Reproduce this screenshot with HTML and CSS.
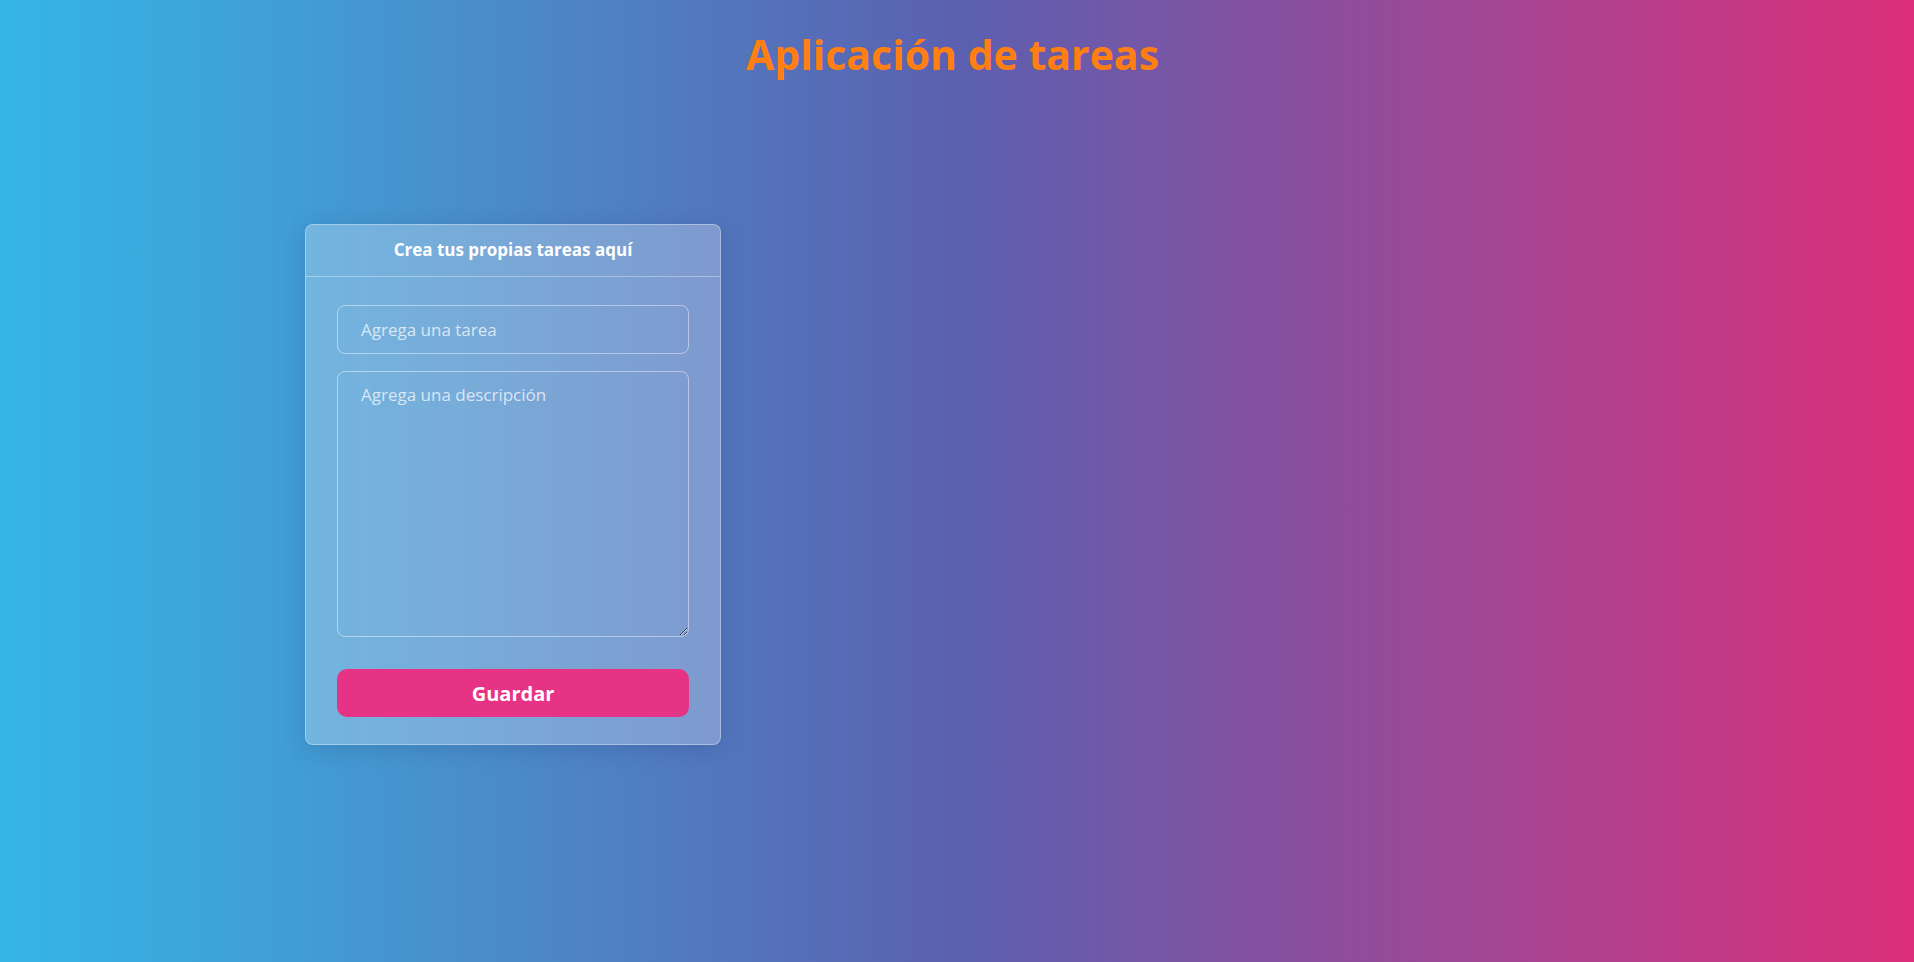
FILE: index.html
```html
<!DOCTYPE html>
<html lang="es">
<head>
<meta charset="utf-8">
<title>Aplicación de tareas</title>
<link rel="stylesheet" href="styles.css">
</head>
<body>
  <h1 class="title">Aplicación de tareas</h1>
  <main class="layout">
    <section class="card">
      <header class="card-header">Crea tus propias tareas aquí</header>
      <form class="card-body">
        <input class="field" type="text" placeholder="Agrega una tarea">
        <textarea class="field area" placeholder="Agrega una descripción"></textarea>
        <button class="save" type="button">Guardar</button>
      </form>
    </section>
  </main>
</body>
</html>
```
FILE: styles.css
```css
* { box-sizing: border-box; }
html, body { height: 100%; }
body {
  margin: 0;
  min-height: 962px;
  font-family: "Open Sans", "DejaVu Sans", sans-serif;
  background: linear-gradient(to right, #34b6e5 0%, #4a8dcb 25%, #5b60b0 50%, #9b4997 75%, #dc2f7a 100%);
}
.title {
  margin: 26px 0 0;
  padding-right: 9px;
  text-align: center;
  font-size: 41px;
  line-height: 57px;
  font-weight: 700;
  color: #ff7f12;
}
.layout {
  display: flex;
  padding: 141px 0 0 305px;
}
.card {
  width: 416px;
  background: rgba(255, 255, 255, 0.26);
  border: 1px solid rgba(255, 255, 255, 0.35);
  border-radius: 8px;
  box-shadow: 0 4px 22px rgba(20, 40, 90, 0.18);
}
.card-header {
  height: 52px;
  border-bottom: 1px solid rgba(255, 255, 255, 0.35);
  color: #fff;
  font-weight: 700;
  font-size: 17px;
  line-height: 50px;
  text-align: center;
}
.card-body {
  display: flex;
  flex-direction: column;
  padding: 28px 31px 27px;
  margin: 0;
}
.field {
  display: block;
  width: 352px;
  height: 49px;
  padding: 0 23px;
  border: 1px solid rgba(255, 255, 255, 0.45);
  border-radius: 8px;
  background: transparent;
  color: #fff;
  font-family: "Open Sans", "DejaVu Sans", sans-serif;
  font-size: 17px;
  outline: none;
}
.field::placeholder { color: rgba(255, 255, 255, 0.72); }
.area {
  margin-top: 17px;
  height: 266px;
  padding: 11px 23px;
  resize: vertical;
}
.save {
  margin-top: 32px;
  width: 352px;
  height: 48px;
  border: 0;
  border-radius: 10px;
  background: #e73385;
  color: #fff;
  font-family: "Open Sans", "DejaVu Sans", sans-serif;
  font-size: 20px;
  font-weight: 700;
  cursor: pointer;
}
```
